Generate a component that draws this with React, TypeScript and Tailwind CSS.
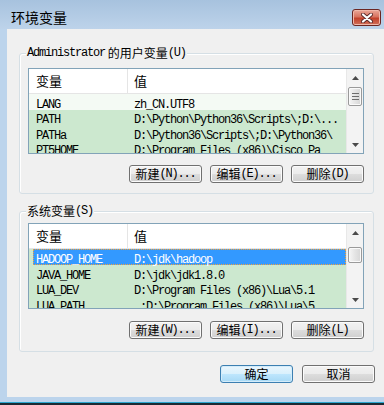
import React from 'react'

// Windows 7 "环境变量" dialog

const cjk = "font-['Noto_Sans_CJK_SC',sans-serif]"

function Mono({ children }: { children: React.ReactNode }) {
  return <span className="font-['Liberation_Mono',monospace] text-[12px] tracking-[-1.2px]">{children}</span>
}

function Han({ children }: { children: React.ReactNode }) {
  return <span className={`${cjk} text-[12px]`}>{children}</span>
}

type Row = { name: string; value: string; bg?: string; selected?: boolean }

function Arrow({ up }: { up?: boolean }) {
  return (
    <div className="h-[17px] flex items-center justify-center">
      <svg width="7" height="4" viewBox="0 0 7 4">
        {up ? <path d="M3.5 0 L7 4 L0 4 Z" fill="#4a4a4a" /> : <path d="M0 0 L7 0 L3.5 4 Z" fill="#4a4a4a" />}
      </svg>
    </div>
  )
}

function ScrollBar({ thumbTop, thumbHeight, grip }: { thumbTop: number; thumbHeight: number; grip?: boolean }) {
  return (
    <div className="w-[17px] flex flex-col bg-[#f3f3f3] border-l border-[#e8e8e8]">
      <Arrow up />
      <div className="flex-1 px-[1px]">
        <div
          className="rounded-[2px] border border-[#9a9a9a] bg-[linear-gradient(90deg,#f6f6f6,#e4e4e4_50%,#d6d6d6)] shadow-[inset_0_0_0_1px_#fafafa] flex flex-col items-center justify-center gap-[2px]"
          style={{ marginTop: thumbTop, height: thumbHeight }}
        >
          {grip && (
            <>
              <div className="w-[7px] h-[1px] bg-[#6d6d6d]" />
              <div className="w-[7px] h-[1px] bg-[#6d6d6d]" />
              <div className="w-[7px] h-[1px] bg-[#6d6d6d]" />
            </>
          )}
        </div>
      </div>
      <Arrow />
    </div>
  )
}

function ListView({ rows, thumbTop, thumbHeight, grip }: { rows: Row[]; thumbTop: number; thumbHeight: number; grip?: boolean }) {
  return (
    <div className="ml-[8px] w-[336px] h-[86px] border border-[#82a3b8] flex bg-[#cce8cf] overflow-hidden">
      <div className="flex-1 flex flex-col overflow-hidden">
        <div className="h-[25px] shrink-0 flex bg-white border-b border-[#e5e5e5]">
          <div className={`w-[99px] pl-[7px] border-r border-[#e5e5e5] flex items-center ${cjk} text-[13px]`}>变量</div>
          <div className={`flex-1 pl-[6px] flex items-center ${cjk} text-[13px]`}>值</div>
        </div>
        {rows.map((r) =>
          r.selected ? (
            <div
              key={r.name}
              className="h-[16px] shrink-0 ml-[4px] flex items-center bg-[#3399ff] text-white border border-dotted border-[#f3a33a] whitespace-nowrap"
            >
              <div className="w-[94px] pl-[2px] shrink-0">
                <Mono>{r.name}</Mono>
              </div>
              <div className="pl-[6px]">
                <Mono>{r.value}</Mono>
              </div>
            </div>
          ) : (
            <div key={r.name} className={`h-[15.5px] shrink-0 flex items-center whitespace-nowrap ${r.bg ?? ''}`}>
              <div className="w-[99px] pl-[7px] shrink-0">
                <Mono>{r.name}</Mono>
              </div>
              <div className="pl-[6px]">
                <Mono>{r.value}</Mono>
              </div>
            </div>
          )
        )}
      </div>
      <ScrollBar thumbTop={thumbTop} thumbHeight={thumbHeight} grip={grip} />
    </div>
  )
}

function WinButton({ han, mono, primary }: { han: string; mono?: string; primary?: boolean }) {
  return (
    <div
      className={`w-[73px] h-[18px] rounded-[3px] border flex items-center justify-center leading-none ${
        primary
          ? 'border-[#3c7fb1] bg-[linear-gradient(#eaf6fd_0%,#d9f0fc_50%,#bee6fd_50%,#a7d9f5_100%)] shadow-[inset_0_0_0_1px_#d4ecfa]'
          : 'border-[#707070] bg-[linear-gradient(#f2f2f2_0%,#ebebeb_50%,#dddddd_50%,#cfcfcf_100%)] shadow-[inset_0_0_0_1px_#fbfbfb]'
      }`}
    >
      <Han>{han}</Han>
      {mono && <Mono>{mono}</Mono>}
    </div>
  )
}

function GroupBox({ label, children, top }: { label: React.ReactNode; children: React.ReactNode; top: string }) {
  return (
    <div className={`${top} ml-[12px] w-[355px] h-[141px] border border-[#d5dfe5] rounded-[3px] shadow-[inset_1px_1px_0_#ffffff] flex flex-col`}>
      <div className="-mt-[8px] ml-[6px] px-[1px] h-[14px] w-fit bg-[#f0f0f0] flex items-center leading-none whitespace-nowrap">
        {label}
      </div>
      {children}
    </div>
  )
}

const userRows: Row[] = [
  { name: 'LANG', value: 'zh_CN.UTF8', bg: 'bg-[#f4faf4]' },
  { name: 'PATH', value: 'D:\\Python\\Python36\\Scripts\\;D:\\...' },
  { name: 'PATHa', value: 'D:\\Python36\\Scripts\\;D:\\Python36\\' },
  { name: 'PT5HOME', value: 'D:\\Program Files (x86)\\Cisco Pa' },
]

const sysRows: Row[] = [
  { name: 'HADOOP_HOME', value: 'D:\\jdk\\hadoop', selected: true },
  { name: 'JAVA_HOME', value: 'D:\\jdk\\jdk1.8.0' },
  { name: 'LUA_DEV', value: 'D:\\Program Files (x86)\\Lua\\5.1' },
  { name: 'LUA_PATH', value: '.;D:\\Program Files (x86)\\Lua\\5' },
]

export default function App() {
  return (
    <div className="w-[384px] h-[405px] flex flex-col bg-[#bcd4ec] text-black overflow-hidden">
      {/* title bar */}
      <div className="h-[29px] shrink-0 flex justify-between bg-[linear-gradient(180deg,#a7c2de,#bdd3ea)]">
        <div className={`pl-[11px] pt-[9px] ${cjk} text-[14px] leading-[17px]`}>环境变量</div>
        <div className="mt-[9px] mr-[3px] w-[29px] h-[17px] rounded-[3px] border border-[#6b2622] bg-[linear-gradient(#eaa899_0%,#d8735f_45%,#c2412b_55%,#d0705a_100%)] shadow-[inset_0_0_0_1px_#f0b8aa] flex items-center justify-center">
          <svg width="12" height="10" viewBox="0 0 12 10">
            <path d="M2 1.5 L10 8.5 M10 1.5 L2 8.5" stroke="#5a2a2a" strokeWidth="4" strokeLinecap="round" />
            <path d="M2 1.5 L10 8.5 M10 1.5 L2 8.5" stroke="#ffffff" strokeWidth="2.2" strokeLinecap="round" />
          </svg>
        </div>
      </div>

      {/* body */}
      <div className="flex h-[368px] shrink-0">
        <div className="w-[7px] shrink-0" />
        <div className="flex-1 bg-[#f0f0f0] flex flex-col">
          <GroupBox
            top="mt-[24px]"
            label={
              <>
                <Mono>Administrator</Mono>
                <Han>&nbsp;的用户变量</Han>
                <Mono>(U)</Mono>
              </>
            }
          >
            <div className="mt-[8px]">
              <ListView rows={userRows} thumbTop={1} thumbHeight={19} grip />
            </div>
            <div className="mt-[11px] ml-[8px] w-[336px] flex justify-end gap-[8px]">
              <WinButton han="新建" mono="(N)..." />
              <WinButton han="编辑" mono="(E)..." />
              <WinButton han="删除" mono="(D)" />
            </div>
          </GroupBox>

          <GroupBox
            top="mt-[17px]"
            label={
              <>
                <Han>系统变量</Han>
                <Mono>(S)</Mono>
              </>
            }
          >
            <div className="mt-[5px]">
              <ListView rows={sysRows} thumbTop={6} thumbHeight={16} />
            </div>
            <div className="mt-[12px] ml-[8px] w-[336px] flex justify-end gap-[8px]">
              <WinButton han="新建" mono="(W)..." />
              <WinButton han="编辑" mono="(I)..." />
              <WinButton han="删除" mono="(L)" />
            </div>
          </GroupBox>

          <div className="mt-[13px] ml-[213px] w-[155px] flex justify-between">
            <WinButton han="确定" primary />
            <WinButton han="取消" />
          </div>
        </div>
      </div>

      {/* bottom frame */}
      <div className="h-[5px] shrink-0" />
      <div className="h-[1px] shrink-0 bg-[#2aa6cf]" />
      <div className="flex-1 bg-[#1c2a33]" />
    </div>
  )
}
